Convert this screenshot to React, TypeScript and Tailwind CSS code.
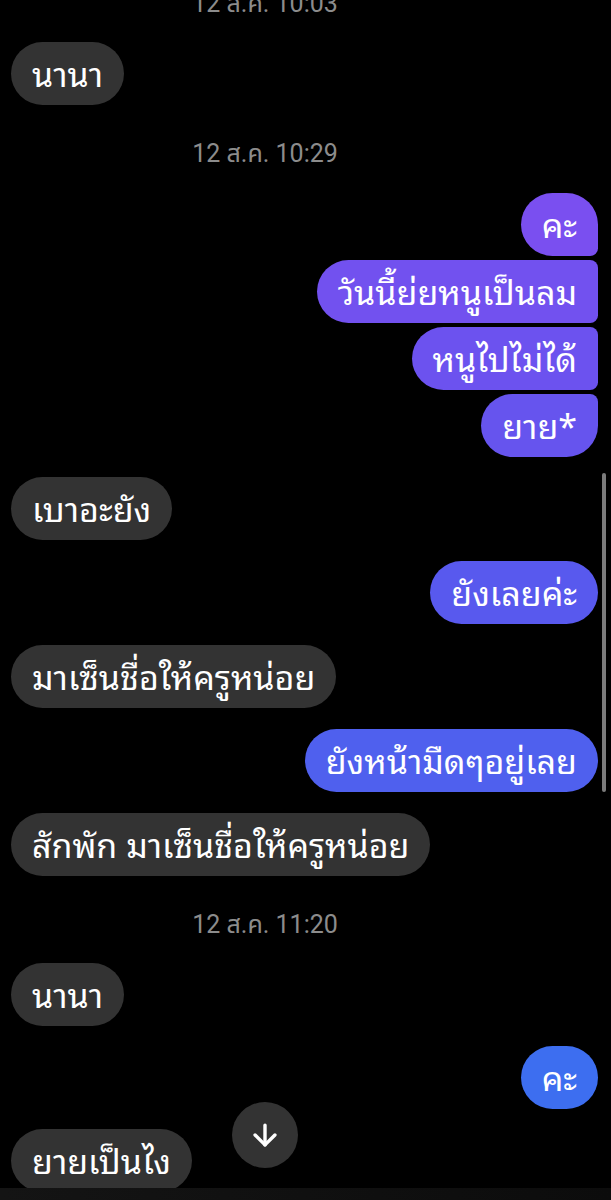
import { ArrowDown } from "lucide-react";

type Side = "in" | "out";

const font = {
  fontFamily: '"Noto Sans Thai Looped", Loma, Garuda, "Noto Sans Thai", "Noto Sans", Roboto, sans-serif',
};

function Stamp({ text }: { text: string }) {
  return (
    <div
      className="flex h-[30px] items-center justify-center pr-[79px] text-[25px] text-[#8c8c8c]"
      style={{ fontFamily: 'Roboto, "Noto Sans Thai", sans-serif' }}
    >
      {text}
    </div>
  );
}

function Bubble({
  side,
  text,
  bg,
  shape = "rounded-full",
}: {
  side: Side;
  text: string;
  bg?: string;
  shape?: string;
}) {
  return (
    <div className={side === "out" ? "flex justify-end" : "flex justify-start"}>
      <div
        className={`flex h-[63px] items-center px-[21px] pb-[3px] text-[34px] leading-none text-white ${shape} ${
          bg ?? "bg-[#333333]"
        }`}
      >
        {text}
      </div>
    </div>
  );
}

export default function App() {
  return (
    <div className="relative h-[1200px] w-[611px] overflow-hidden bg-black" style={font}>
      <div className="-mt-[11px] flex flex-col pl-[11px] pr-[13px]">
        <Stamp text="12 ส.ค. 10:03" />
        <div className="mt-[23px]">
          <Bubble side="in" text="นานา" />
        </div>
        <div className="mt-[34px]">
          <Stamp text="12 ส.ค. 10:29" />
        </div>
        <div className="mt-[24px] flex flex-col gap-[4px]">
          <Bubble side="out" text="คะ" bg="bg-[#7a4ff0]" shape="rounded-[32px] rounded-br-[8px]" />
          <Bubble side="out" text="วันนี้ย่ยหนูเป็นลม" bg="bg-[#7251ef]" shape="rounded-[32px] rounded-r-[8px]" />
          <Bubble side="out" text="หนูไปไม่ได้" bg="bg-[#6c52ef]" shape="rounded-[32px] rounded-r-[8px]" />
          <Bubble side="out" text="ยาย*" bg="bg-[#6654ee]" shape="rounded-[32px] rounded-tr-[8px]" />
        </div>
        <div className="mt-[20px] flex flex-col gap-[21px]">
          <Bubble side="in" text="เบาอะยัง" />
          <Bubble side="out" text="ยังเลยค่ะ" bg="bg-[#5859ee]" />
          <Bubble side="in" text="มาเซ็นชื่อให้ครูหน่อย" />
          <Bubble side="out" text="ยังหน้ามืดๆอยู่เลย" bg="bg-[#4f60ee]" />
          <Bubble side="in" text="สักพัก มาเซ็นชื่อให้ครูหน่อย" />
        </div>
        <div className="mt-[34px]">
          <Stamp text="12 ส.ค. 11:20" />
        </div>
        <div className="mt-[23px] flex flex-col gap-[20px]">
          <Bubble side="in" text="นานา" />
          <Bubble side="out" text="คะ" bg="bg-[#3d6ef0]" />
          <Bubble side="in" text="ยายเป็นไง" />
        </div>
      </div>

      {/* scrollbar */}
      <div className="absolute left-[602px] top-[473px] h-[319px] w-[4px] rounded-full bg-[#7b7b7b]" />

      {/* jump to bottom */}
      <div className="absolute left-[232px] top-[1102px] flex h-[66px] w-[66px] items-center justify-center rounded-full bg-[#333333]">
        <ArrowDown className="h-[34px] w-[34px] text-white" strokeWidth={2.4} />
      </div>

      <div className="absolute bottom-0 left-0 h-[12px] w-full bg-gradient-to-r from-[#141414] to-[#0c0c0c]" />
    </div>
  );
}
